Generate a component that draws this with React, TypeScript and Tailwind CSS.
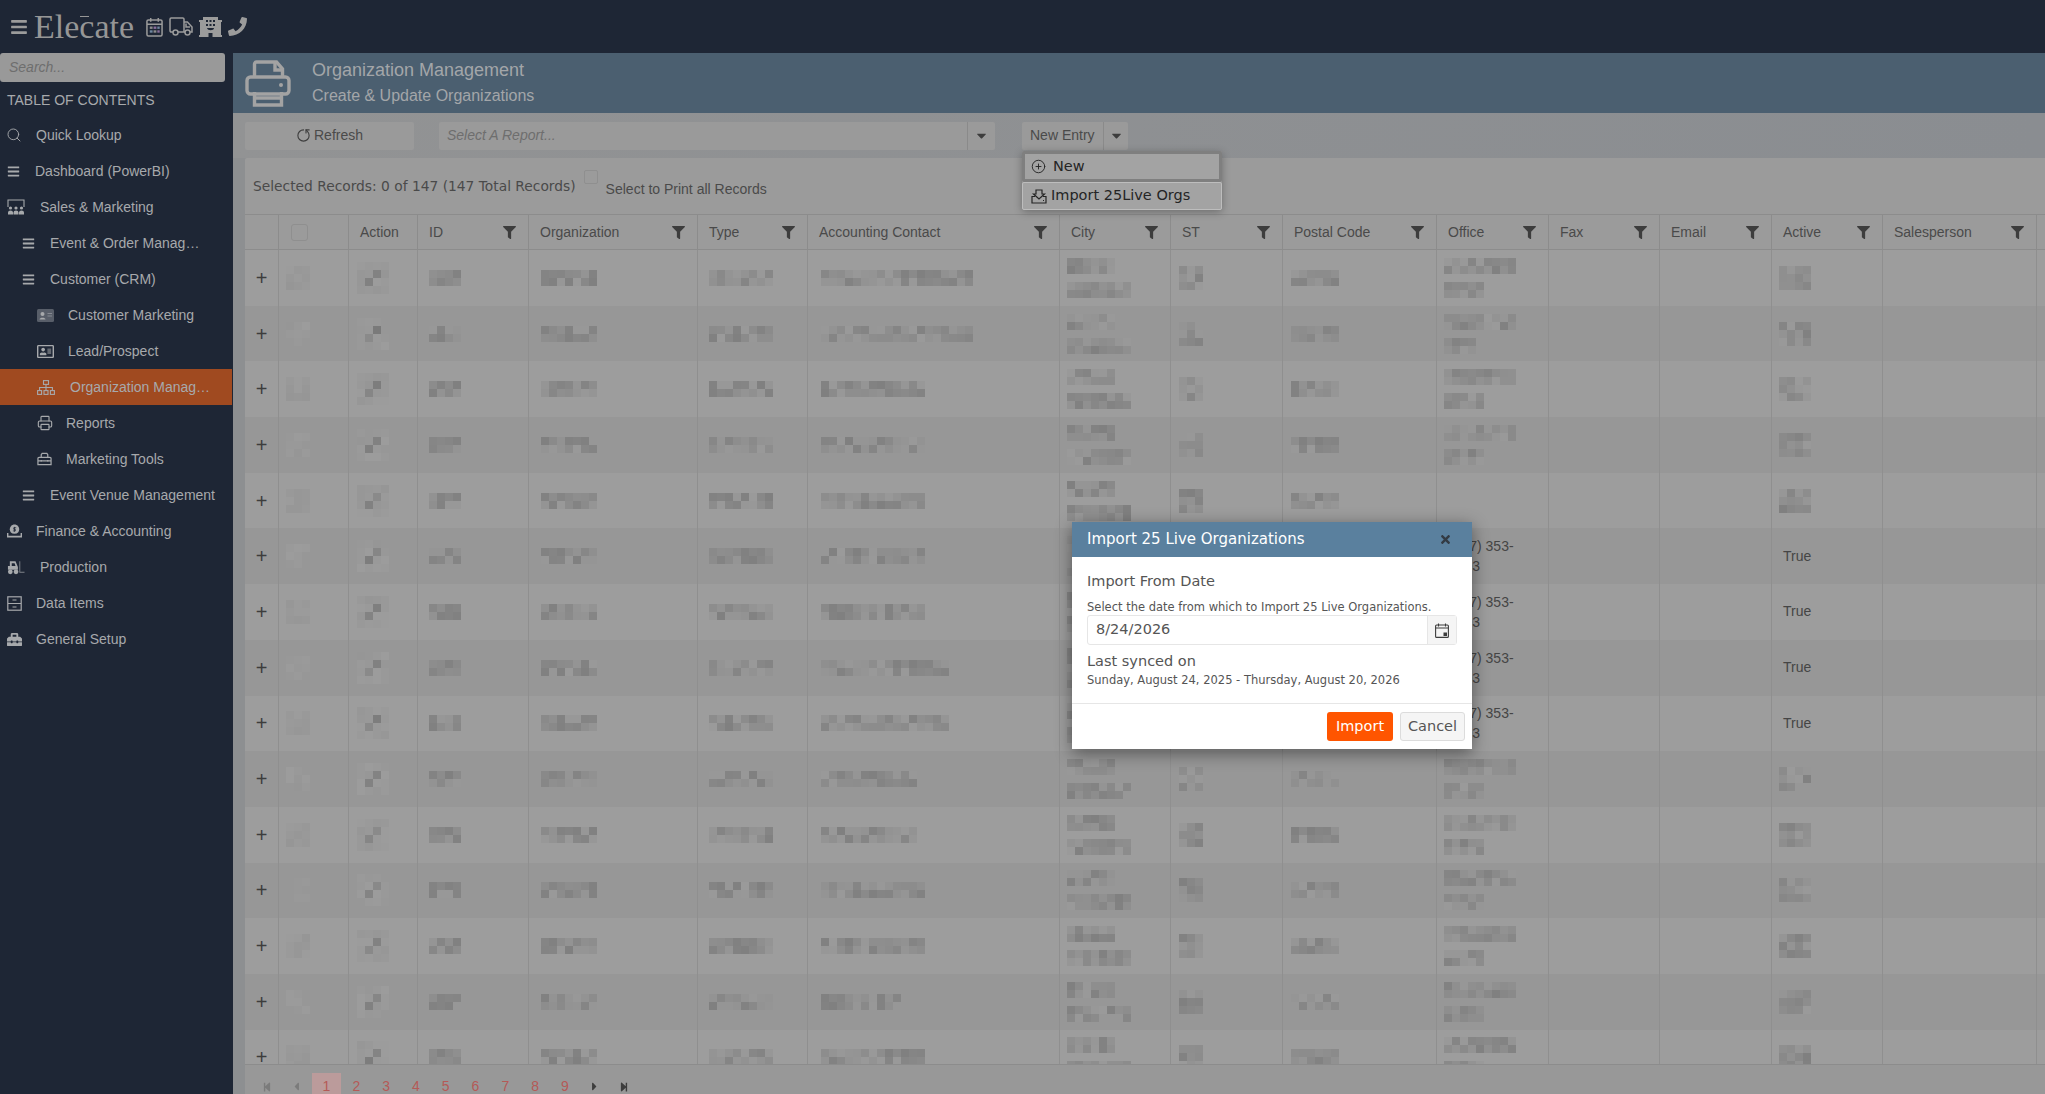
import type { ReactNode } from "react";
import {
  FaBars,
  FaCaretDown,
  FaCaretLeft,
  FaCaretRight,
  FaFilter,
  FaPhone,
  FaRegAddressCard,
  FaStepBackward,
  FaStepForward,
  FaTimes,
  FaToolbox,
} from "react-icons/fa";
import { CirclePlus, Printer, RotateCw, Search } from "lucide-react";

const ARIAL = "font-['Liberation_Sans',Arial,sans-serif]";
const VERDANA = "font-['DejaVu_Sans',Verdana,sans-serif]";

const CalendarLogo = () => (
  <svg viewBox="0 0 18 21" className="w-[17px] h-[20px]" fill="none" stroke="currentColor" strokeWidth="1.6">
    <rect x="1" y="3" width="16" height="17" rx="1.5" />
    <path d="M1 7.5h16M5 1v4M13 1v4" />
    <rect x="4" y="10" width="3" height="2.5" fill="#8d8d8d" stroke="none" />
    <rect x="8" y="10" width="3" height="2.5" fill="#8a6f9e" stroke="none" />
    <rect x="12" y="10" width="2.5" height="2.5" fill="#6f87a0" stroke="none" />
    <rect x="4" y="14" width="3" height="2.5" fill="#6f87a0" stroke="none" />
    <rect x="8" y="14" width="3" height="2.5" fill="#8d8d8d" stroke="none" />
    <rect x="12" y="14" width="2.5" height="2.5" fill="#8a6f9e" stroke="none" />
  </svg>
);

const TruckLogo = () => (
  <svg viewBox="0 0 24 19" className="w-[24px] h-[19px]" fill="none" stroke="currentColor" strokeWidth="1.5">
    <path d="M4 15H2.2A1.2 1.2 0 0 1 1 13.8V2.2A1.2 1.2 0 0 1 2.2 1h11.6A1.2 1.2 0 0 1 15 2.2V15H9" />
    <path d="M15 5h3.4l4.6 5v5h-2M15 15h1" />
    <path d="M17 6.5v3.500h4" />
    <circle cx="6.5" cy="15.5" r="2.5" />
    <circle cx="18.5" cy="15.5" r="2.5" />
  </svg>
);

const HotelLogo = () => (
  <svg viewBox="0 0 23 20" className="w-[23px] h-[20px]" fill="currentColor">
    <path
      fillRule="evenodd"
      d="M0 3h4V0h15v3h4v2h-1v13h1v2H13.500v-4h-4v4H0v-2h1V5H0zM7 3v2h2V3zM10.500 3v2h2V3zM14 3v2h2V3zM7 7v2h2V7zM10.500 7v2h2V7zM14 7v2h2V7zM8 11c.5 3 7 3 7 0z"
    />
  </svg>
);

const ClassIcon = () => (
  <svg viewBox="0 0 18 16" className="w-[18px] h-[16px]" fill="none" stroke="currentColor" strokeWidth="1.1">
    <path d="M1 8V1h16v7" />
    <g fill="currentColor" stroke="none">
      <circle cx="3.5" cy="9" r="1.6" />
      <circle cx="9" cy="9" r="1.6" />
      <circle cx="14.5" cy="9" r="1.6" />
      <path d="M1 15.5v-2a2.5 2 0 0 1 5 0v2zM6.5 15.5v-2a2.5 2 0 0 1 5 0v2zM12 15.5v-2a2.5 2 0 0 1 5 0v2z" />
    </g>
  </svg>
);

const IdSolid = () => (
  <svg viewBox="0 0 17 13" className="w-[17px] h-[13px]">
    <rect width="17" height="13" rx="1.500" fill="#585e69" />
    <circle cx="5.500" cy="5" r="2" fill="#a7a9ac" />
    <path d="M2.500 10.500c0-2.500 6-2.500 6 0z" fill="#a7a9ac" />
    <path d="M10.500 4.500h4.500M10.500 7h4.500" stroke="#8b8f96" strokeWidth="0.900" />
  </svg>
);

const SitemapIcon = () => (
  <svg viewBox="0 0 18 15" className="w-[18px] h-[15px]" fill="none" stroke="currentColor" strokeWidth="1.100">
    <rect x="6.500" y="0.600" width="5" height="3.800" />
    <rect x="0.600" y="10.600" width="4" height="3.800" />
    <rect x="7" y="10.600" width="4" height="3.800" />
    <rect x="13.400" y="10.600" width="4" height="3.800" />
    <path d="M9 4.500v6M2.600 10.500V7.500h12.800v3" />
  </svg>
);

const ToolboxLine = () => (
  <svg viewBox="0 0 16 14" className="w-[15px] h-[14px]" fill="none" stroke="currentColor" strokeWidth="1.3">
    <path d="M1 6.5A1.2 1.2 0 0 1 2.2 5.3h11.6A1.2 1.2 0 0 1 15 6.5V13H1zM1 9h14M4.5 5V2.5l1-1.500h5l1 1.500V5M4.500 8v2M11.500 8v2" />
  </svg>
);

const FinanceIcon = () => (
  <svg viewBox="0 0 16 14" className="w-[15px] h-[14px]" fill="currentColor">
    <path d="M8 0c-3 0-5 2.300-5 5.200C3 8 4.500 10 8 10s5-2 5-4.800C13 2.300 11 0 8 0z" />
    <path d="M0 9h1.500v3h13V9H16v5H0z" />
    <path d="M9.800 3.500H7.200v1.700h1.700v1.700H6.300M8 2.600v5.200" fill="none" stroke="#1e2635" strokeWidth="0.800" />
  </svg>
);

const ForkliftIcon = () => (
  <svg viewBox="0 0 19 15" className="w-[18px] h-[15px]" fill="currentColor">
    <path d="M3 1h6l2.500 6v3H1V6h2zM5 3v3h4L8 3z" fillRule="evenodd" />
    <circle cx="3.500" cy="12" r="2.500" />
    <circle cx="9.500" cy="12" r="2.500" />
    <path d="M13 1h1v11h4.500v1H13z" opacity="0.7" />
  </svg>
);

const CabinetIcon = () => (
  <svg viewBox="0 0 15 15" className="w-[15px] h-[15px]" fill="none" stroke="currentColor" strokeWidth="1.200">
    <rect x="0.800" y="0.800" width="13.400" height="13.400" />
    <path d="M1 7.500h13M5.500 4h4M5.500 11h4" />
  </svg>
);

const PageIcon = () => (
  <svg viewBox="0 0 46 47" className="w-[46px] h-[47px]" fill="none" stroke="#a3a3a3" strokeWidth="3.400">
    <path d="M9.500 18V4a2 2 0 0 1 2-2h20l6 7v9" />
    <path d="M30 2v8h8" />
    <rect x="2" y="17" width="42" height="17" rx="3.500" />
    <path d="M9.500 32v13h27V32M9 38h28" />
    <circle cx="36" cy="25" r="2" fill="#a3a3a3" stroke="none" />
  </svg>
);

const DownloadTray = () => (
  <svg viewBox="0 0 16 15" className="w-[16px] h-[15px]" fill="none" stroke="#252525" strokeWidth="1.200">
    <path d="M5 1h6v4h2.500L8 10 2.500 5H5zM4 7.500H1V14h14V7.500h-3M12 11.500h1" />
  </svg>
);

const CalendarAddon = () => (
  <svg viewBox="0 0 14 15" className="w-[14px] h-[15px]" fill="none" stroke="#3d3d3d" strokeWidth="1.100">
    <rect x="0.600" y="2" width="12.800" height="12.400" rx="1" />
    <path d="M0.600 5h12.800M3.500 0.500v3M10.500 0.500v3" />
    <rect x="8.500" y="9.500" width="3.500" height="3.500" fill="#3d3d3d" stroke="none" />
  </svg>
);

type NavItem = { label: string; icon: ReactNode; pad: string; box: string; text?: string };

const NAV: NavItem[] = [
  { label: "Quick Lookup", icon: <Search size={16} strokeWidth={1.400} />, pad: "pl-[6px]", box: "w-[30px]" },
  { label: "Dashboard (PowerBI)", icon: <FaBars size={13} />, pad: "pl-[7px]", box: "w-[28px]" },
  { label: "Sales & Marketing", icon: <ClassIcon />, pad: "pl-[7px]", box: "w-[33px]" },
  { label: "Event & Order Management", icon: <FaBars size={13} />, pad: "pl-[22px]", box: "w-[28px]", text: "w-[150px] truncate" },
  { label: "Customer (CRM)", icon: <FaBars size={13} />, pad: "pl-[22px]", box: "w-[28px]" },
  { label: "Customer Marketing", icon: <IdSolid />, pad: "pl-[37px]", box: "w-[31px]" },
  { label: "Lead/Prospect", icon: <FaRegAddressCard size={17} />, pad: "pl-[37px]", box: "w-[31px]" },
  { label: "Organization Management", icon: <SitemapIcon />, pad: "pl-[37px]", box: "w-[33px]", text: "w-[142px] truncate" },
  { label: "Reports", icon: <Printer size={16} strokeWidth={1.700} />, pad: "pl-[37px]", box: "w-[29px]" },
  { label: "Marketing Tools", icon: <ToolboxLine />, pad: "pl-[37px]", box: "w-[29px]" },
  { label: "Event Venue Management", icon: <FaBars size={13} />, pad: "pl-[22px]", box: "w-[28px]" },
  { label: "Finance & Accounting", icon: <FinanceIcon />, pad: "pl-[7px]", box: "w-[29px]" },
  { label: "Production", icon: <ForkliftIcon />, pad: "pl-[7px]", box: "w-[33px]" },
  { label: "Data Items", icon: <CabinetIcon />, pad: "pl-[7px]", box: "w-[29px]" },
  { label: "General Setup", icon: <FaToolbox size={15} />, pad: "pl-[7px]", box: "w-[29px]" },
];

const COLS = ["Action", "ID", "Organization", "Type", "Accounting Contact", "City", "ST", "Postal Code", "Office", "Fax", "Email", "Active", "Salesperson"];
const GRID = "grid grid-cols-[33px_70px_69px_111px_169px_110px_252px_111px_112px_154px_112px_111px_112px_111px_154px_1fr]";

const noise = (seed: number) => {
  const x = Math.sin(seed * 12.9898) * 43758.5453;
  return x - Math.floor(x);
};

// the screenshot has the cell contents censored by 8px blocks; shape is cells per row, 0 leaves a gap
const Mosaic = ({ shape, seed, faint }: { shape: number[]; seed: number; faint?: boolean }) => (
  <div className="flex flex-col">
    {shape.map((cols, r) => (
      <div key={r} className="flex h-2">
        {Array.from({ length: cols }, (_, c) => {
          const n = noise(seed + r * 31 + c * 7);
          const g = faint ? 150 + Math.round(n * 6) : 128 + Math.round(n * 26);
          return <div key={c} className="w-2 h-2" style={{ backgroundColor: `rgb(${g},${g},${g})` }} />;
        })}
      </div>
    ))}
  </div>
);

const ActionMosaic = ({ seed }: { seed: number }) => (
  <div className="grid grid-cols-4 w-8 h-8 bg-[#999999]">
    {Array.from({ length: 16 }, (_, k) => {
      const dark = k === 6 || k === 9;
      const g = dark ? 122 + Math.round(noise(seed + k) * 16) : 150 + Math.round(noise(seed + k) * 6);
      return <div key={k} className="w-2 h-2" style={{ backgroundColor: `rgb(${g},${g},${g})` }} />;
    })}
  </div>
);

const ACCOUNTING = [19, 19, 13, 13, 13, 13, 13, 16, 16, 12, 12, 13, 13, 10, 13];
const TRUE_ROWS = [5, 6, 7, 8];

const Row = ({ i }: { i: number }) => {
  const hasTrue = TRUE_ROWS.includes(i);
  const cell = "border-l border-[#8f8f8f] flex items-center overflow-hidden";
  return (
    <div className={`${GRID} h-[55.7px] ${i % 2 ? "bg-[#979797]" : "bg-[#9d9d9d]"}`}>
      <div className="flex items-center justify-center text-[#3d3d3d] text-[20px] leading-none">+</div>
      <div className={`${cell} pl-[7px]`}><Mosaic shape={[3, 3, 3]} seed={i + 1} faint /></div>
      <div className={`${cell} pl-[8px]`}><ActionMosaic seed={i + 20} /></div>
      <div className={`${cell} pl-[11px]`}><Mosaic shape={[4, 4]} seed={i + 40} /></div>
      <div className={`${cell} pl-[12px]`}><Mosaic shape={[7, 7]} seed={i + 60} /></div>
      <div className={`${cell} pl-[11px]`}><Mosaic shape={[8, 8]} seed={i + 80} /></div>
      <div className={`${cell} pl-[13px]`}><Mosaic shape={[ACCOUNTING[i], ACCOUNTING[i]]} seed={i + 100} /></div>
      <div className={`${cell} pl-[7px]`}><Mosaic shape={[6, 6, 0, 8, 8]} seed={i + 120} /></div>
      <div className={`${cell} pl-[8px]`}><Mosaic shape={[3, 3, 3]} seed={i + 140} /></div>
      <div className={`${cell} pl-[8px]`}><Mosaic shape={[6, 6]} seed={i + 160} /></div>
      <div className={`${cell} pl-[7px] ${ARIAL} text-[14px] leading-[20px] text-[#454545]`}>
        {hasTrue ? (
          <span className="pl-[5px]">(777) 353-<br />0003</span>
        ) : i === 4 ? null : (
          <Mosaic shape={[9, 9, 0, 5, 5]} seed={i + 180} />
        )}
      </div>
      <div className={cell} />
      <div className={cell} />
      <div className={`${cell} pl-[7px] ${ARIAL} text-[14px] text-[#454545]`}>
        {hasTrue ? <span className="pl-[4px]">True</span> : <Mosaic shape={[4, 4, 4]} seed={i + 200} />}
      </div>
      <div className={cell} />
      <div className={cell} />
    </div>
  );
};

const PAGES = ["1", "2", "3", "4", "5", "6", "7", "8", "9"];

export default function App() {
  return (
    <div className={`relative flex flex-col w-screen h-screen overflow-hidden bg-[#8d8f91] ${ARIAL}`}>
      <header className="flex items-center h-[53px] shrink-0 bg-[#1e2635] text-[#9b9b9b] pl-[10px]">
        <FaBars size={18} />
        <span className="relative ml-[6px] font-['Liberation_Serif',serif] text-[34px] leading-none text-[#969696]">
          Elecate
          <span className="absolute left-[46px] top-[6px] w-[9px] h-px bg-[#969696]" />
        </span>
        <div className="flex items-center ml-[12px] gap-[6px]">
          <CalendarLogo />
          <TruckLogo />
          <HotelLogo />
          <FaPhone size={19} />
        </div>
      </header>

      <div className="flex flex-1 min-h-0">
        <aside className="w-[233px] shrink-0 bg-[#1e2635] text-[#a7a9ac] text-[14px]">
          <div className="w-[225px] h-[29px] bg-[#999999] rounded-[3px] flex items-center pl-[9px] italic text-[#6e6e6e]">
            Search...
          </div>
          <div className="h-[35px] pl-[7px] pt-px flex items-center text-[#a7a9ac]">TABLE OF CONTENTS</div>
          <nav>
            {NAV.map((item) => (
              <div
                key={item.label}
                className={`flex items-center h-9 ${item.pad} ${item.label === "Organization Management" ? "bg-[#a04a20] w-[232px]" : ""}`}
              >
                <span className={`${item.box} shrink-0 flex items-center`}>{item.icon}</span>
                <span className={item.text ?? ""}>{item.label}</span>
              </div>
            ))}
          </nav>
        </aside>

        <main className="flex-1 min-w-0 flex flex-col">
          <div className="h-[60px] shrink-0 bg-[#4b5f70] flex items-center pl-[12px] text-[#a3a6a9]">
            <PageIcon />
            <div className="ml-[21px] -mt-[1px]">
              <div className="text-[18px] leading-[26px]">Organization Management</div>
              <div className="text-[16px] leading-[25px]">Create &amp; Update Organizations</div>
            </div>
          </div>

          <div className="h-[45px] shrink-0 pl-[12px] flex items-center text-[14px] text-[#4a4a4a] bg-gradient-to-r from-[#929394] to-[#8a8d91]">
            <div className="w-[169px] h-[28px] bg-[#9a9a9a] rounded-[2px] flex items-center justify-center gap-[3px]">
              <RotateCw size={15} strokeWidth={1.800} className="-scale-x-100 rotate-90 text-[#3f3f3f]" />
              Refresh
            </div>
            <div className="ml-[25px] w-[556px] h-[28px] bg-[#9a9a9a] rounded-[2px] flex items-center">
              <span className="flex-1 pl-[8px] italic text-[#6e6e6e]">Select A Report...</span>
              <span className="w-[28px] h-full border-l border-[#8a8a8a] flex items-center justify-center text-[#3d3d3d]">
                <FaCaretDown size={15} />
              </span>
            </div>
            <div className="ml-[27px] w-[106px] h-[28px] bg-[#9a9a9a] rounded-[2px] flex items-center">
              <span className="w-[81px] pl-[8px]">New Entry</span>
              <span className="flex-1 h-full border-l border-[#8a8a8a] flex items-center justify-center text-[#3d3d3d]">
                <FaCaretDown size={15} />
              </span>
            </div>
          </div>

          <section className="flex-1 min-h-0 ml-[12px] flex flex-col bg-[#9b9b9b] rounded-tl-[2px]">
            <div className="h-[56px] shrink-0 flex items-start text-[#4a4a4a]">
              <span className={`${VERDANA} text-[13.800px] leading-none mt-[22px] ml-[8px]`}>
                Selected Records: 0 of 147 (147 Total Records)
              </span>
              <span className="mt-[12px] ml-[8px] w-[14px] h-[14px] rounded-[2px] border border-[#8f8f8f]" />
              <span className="mt-[24px] ml-[8px] text-[14px] leading-none">Select to Print all Records</span>
            </div>

            <div className={`${GRID} h-[36px] shrink-0 border-t border-b border-[#8c8c8c] text-[14px] text-[#4a4a4a]`}>
              <div />
              <div className="border-l border-[#8c8c8c] flex items-center pl-[12px]">
                <span className="w-[17px] h-[17px] rounded-[3px] border border-[#8f8f8f]" />
              </div>
              {COLS.map((col, i) => (
                <div key={col} className="border-l border-[#8c8c8c] flex items-center justify-between pl-[11px] pr-[12px]">
                  <span>{col}</span>
                  {i > 0 && <FaFilter size={13} className="text-[#3d3d3d]" />}
                </div>
              ))}
              <div className="border-l border-[#8c8c8c]" />
            </div>

            <div className="flex-1 min-h-0 overflow-hidden">
              {ACCOUNTING.map((_, i) => (
                <Row key={i} i={i} />
              ))}
            </div>

            <div className="h-[30px] shrink-0 border-t border-[#8c8c8c] bg-[#989898] flex pl-[7px] text-[14px] text-[#b55a57]">
              {[<FaStepBackward key="f" size={10} className="text-[#7b7b7b]" />, <FaCaretLeft key="p" size={13} className="text-[#7b7b7b]" />].map((icon, i) => (
                <div key={i} className="w-[29.8px] mt-2 pt-[6px] flex items-center justify-center">{icon}</div>
              ))}
              {PAGES.map((p) => (
                <div key={p} className={`w-[29.8px] mt-2 pt-[6px] flex items-center justify-center ${p === "1" ? "bg-[#bb9b9b]" : ""}`}>
                  {p}
                </div>
              ))}
              {[<FaCaretRight key="n" size={13} className="text-[#3d3d3d]" />, <FaStepForward key="l" size={10} className="text-[#3d3d3d]" />].map((icon, i) => (
                <div key={i} className="w-[29.8px] mt-2 pt-[6px] flex items-center justify-center">{icon}</div>
              ))}
            </div>
          </section>
        </main>
      </div>

      {/* New Entry dropdown */}
      <div className={`absolute left-[1022px] top-[151px] w-[200px] h-[59px] flex flex-col bg-[#9a9a9a] rounded-[2px] shadow-[0_2px_8px_rgba(0,0,0,0.3)] ${VERDANA} text-[14.500px] text-[#252525]`}>
        <div className="h-[31px] border-[3px] border-[#7f7f7f] rounded-[2px] bg-[#a3a3a3] flex items-center pl-[6px] gap-[7px]">
          <CirclePlus size={15} strokeWidth={1.500} />
          New
        </div>
        <div className="flex-1 border border-[#bdbdbd] rounded-[2px] bg-[#a3a3a3] flex items-center pl-[8px] gap-[4px]">
          <DownloadTray />
          Import 25Live Orgs
        </div>
      </div>

      {/* Import modal */}
      <div className={`absolute left-[1072px] top-[522px] w-[400px] h-[227px] flex flex-col bg-white shadow-[0_4px_16px_rgba(0,0,0,0.45)] ${VERDANA} text-[#555555]`}>
        <div className="h-[35px] shrink-0 bg-[#5a809e] flex items-center justify-between pl-[15px] pr-[20px] text-white text-[15px]">
          Import 25 Live Organizations
          <FaTimes size={13} className="text-[#333b44]" />
        </div>
        <div className="flex-1 px-[15px]">
          <div className="text-[14.500px] leading-none mt-[17px]">Import From Date</div>
          <div className="text-[11.500px] leading-none mt-[13px]">Select the date from which to Import 25 Live Organizations.</div>
          <div className="mt-[2px] h-[30px] border border-[#e6e6e6] rounded-[3px] flex items-center text-[14.500px]">
            <span className="flex-1 pl-[8px]">8/24/2026</span>
            <span className="w-[29px] h-full bg-[#f5f5f5] border-l border-[#e6e6e6] flex items-center justify-center">
              <CalendarAddon />
            </span>
          </div>
          <div className="text-[14.500px] leading-none mt-[9px]">Last synced on</div>
          <div className="text-[11.500px] leading-none mt-[6px]">Sunday, August 24, 2025 - Thursday, August 20, 2026</div>
        </div>
        <div className="h-[46px] shrink-0 border-t border-[#e6e6e6] flex items-center justify-end gap-[7px] pr-[7px] text-[14.500px]">
          <span className="w-[66px] h-[29px] bg-[#ff5500] text-white rounded-[3px] flex items-center justify-center">Import</span>
          <span className="w-[65px] h-[29px] bg-[#f5f5f5] border border-[#dcdcdc] rounded-[3px] flex items-center justify-center">Cancel</span>
        </div>
      </div>
    </div>
  );
}
